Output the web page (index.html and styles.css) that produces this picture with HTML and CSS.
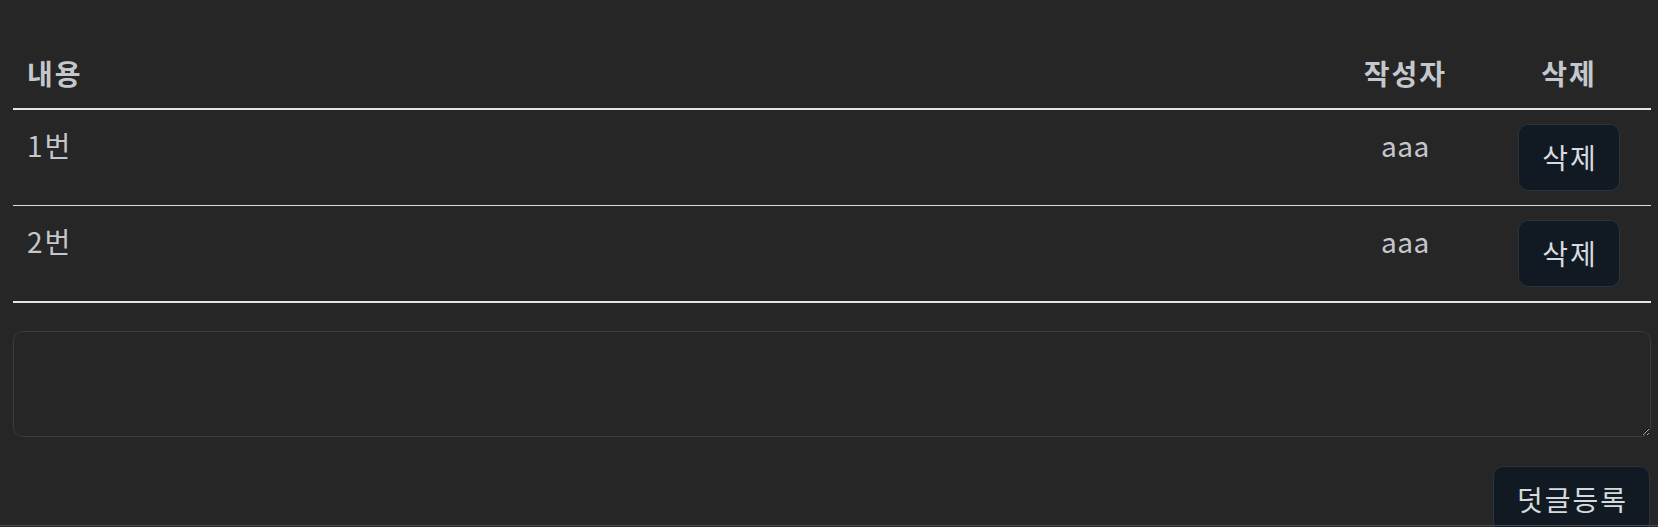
FILE: index.html
```html
<!DOCTYPE html>
<html lang="ko">
<head>
<meta charset="utf-8">
<title>댓글</title>
<link rel="stylesheet" href="styles.css">
</head>
<body>
<div class="wrap">
  <table class="comments">
    <colgroup>
      <col class="col-content">
      <col class="col-writer">
      <col class="col-del">
    </colgroup>
    <thead>
      <tr>
        <th>내용</th>
        <th class="center">작성자</th>
        <th class="center">삭제</th>
      </tr>
    </thead>
    <tbody>
      <tr>
        <td>1번</td>
        <td class="center latin">aaa</td>
        <td class="center"><button class="btn">삭제</button></td>
      </tr>
      <tr>
        <td>2번</td>
        <td class="center latin">aaa</td>
        <td class="center"><button class="btn">삭제</button></td>
      </tr>
    </tbody>
  </table>
  <textarea class="reply" rows="2"></textarea>
  <div class="actions">
    <button class="btn">덧글등록</button>
  </div>
</div>
<div class="edge"></div>
</body>
</html>
```
FILE: styles.css
```css
html, body {
  margin: 0;
  padding: 0;
  background: #262626;
  overflow: hidden;
}

body {
  font-family: "Noto Sans CJK KR", "Noto Sans", sans-serif;
  color: #c4c8cd;
  font-size: 28px;
  line-height: 42px;
}

.wrap {
  padding: 38px 7px 0 13px;
}

.comments {
  width: 100%;
  border-collapse: collapse;
  table-layout: fixed;
}

.col-content { width: 80%; }
.col-writer { width: 10%; }
.col-del { width: 10%; }

.comments th,
.comments td {
  padding: 14px;
  vertical-align: top;
  text-align: left;
  letter-spacing: 2px;
}

.comments th {
  font-weight: 700;
  border-bottom: 2px solid #e4e4e4;
}

.comments .center {
  text-align: center;
}

.comments .latin {
  letter-spacing: 0.5px;
}

.comments td {
  font-weight: 400;
  border-bottom: 1px solid #dcdcdc;
}

.comments tbody tr:last-child td {
  border-bottom: 2px solid #e4e4e4;
}

.btn {
  font-family: inherit;
  font-size: 28px;
  line-height: 42px;
  letter-spacing: 2px;
  color: #d6dade;
  background: #111a23;
  border: 1px solid #2b333d;
  border-radius: 10px;
  padding: 11px 21px 12px 23px;
  margin: 0;
  cursor: pointer;
}

.reply {
  display: block;
  box-sizing: border-box;
  width: 100%;
  height: 106px;
  margin: 28px 0 0;
  background: #262626;
  border: 1px solid #363c44;
  border-radius: 10px;
  color: #c4c8cd;
  font-family: inherit;
  font-size: 28px;
  line-height: 42px;
  padding: 10px 21px;
}

.actions {
  display: flex;
  justify-content: flex-end;
  margin-top: 29px;
}

.actions .btn {
  margin-right: 1px;
}

.edge {
  position: fixed;
  left: 0;
  right: 0;
  bottom: 1px;
  height: 1px;
  background: #474c53;
}
```
